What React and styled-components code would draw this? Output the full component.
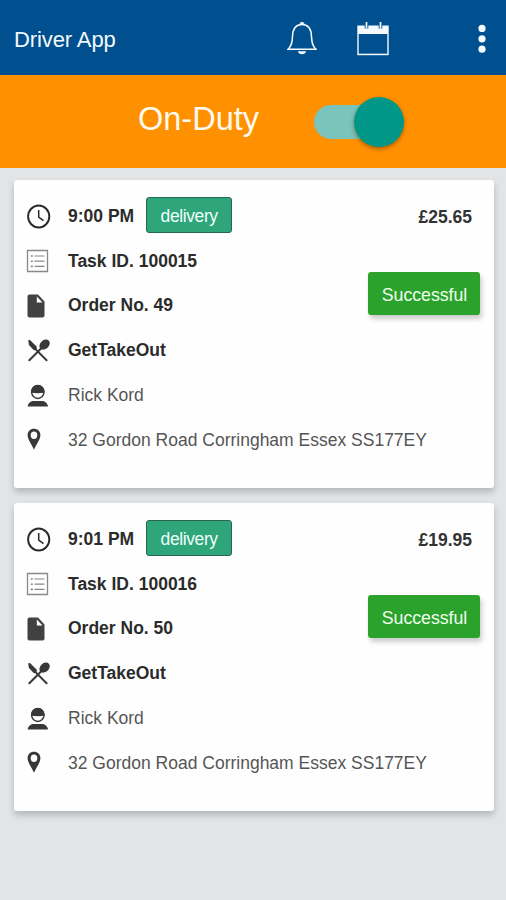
import React, { useState } from "react";
import styled, { createGlobalStyle } from "styled-components";

const GlobalStyle = createGlobalStyle`
  * {
    box-sizing: border-box;
  }
  body {
    margin: 0;
    background: #e2e4e6;
    font-family: "Liberation Sans", Arial, Helvetica, sans-serif;
  }
`;

const Page = styled.div`
  min-height: 900px;
  background: #e2e4e6;
`;

const Header = styled.header`
  display: flex;
  align-items: center;
  height: 75px;
  padding: 3px 20px 0 14px;
  background: #00508f;
  color: #f4faff;
`;

const Title = styled.h1`
  flex: 1;
  margin: 2px 0 0;
  font-size: 22px;
  font-weight: 400;
  letter-spacing: -0.1px;
`;

const IconButton = styled.button`
  display: flex;
  margin: 0 ${(props) => props.$gap || 0}px 0 0;
  padding: 0;
  border: 0;
  background: none;
  color: inherit;
  cursor: pointer;
`;

const DutyBar = styled.section`
  display: flex;
  align-items: center;
  height: 93px;
  padding-left: 138px;
  background: #ff9000;
`;

const DutyLabel = styled.span`
  width: 176px;
  margin-top: -4px;
  color: #fffaf0;
  font-size: 32.5px;
`;

const Track = styled.button`
  display: flex;
  align-items: center;
  justify-content: ${(props) => (props.$on ? "flex-end" : "flex-start")};
  width: 90px;
  height: 34px;
  margin-top: 1px;
  padding: 0;
  border: 0;
  border-radius: 17px;
  background: #7bc4bb;
  cursor: pointer;
`;

const Knob = styled.span`
  flex: none;
  width: 50px;
  height: 50px;
  border-radius: 50%;
  background: #009788;
  box-shadow: 0 2px 4px rgba(80, 50, 0, 0.5);
`;

const TaskList = styled.main`
  display: flex;
  flex-direction: column;
  gap: 15px;
  padding: 12px 12px 0 14px;
`;

const Card = styled.article`
  display: flex;
  height: 308px;
  padding: 14px 14px 0 12px;
  border-radius: 3px;
  background: #fefefe;
  box-shadow: 0 4px 6px rgba(60, 70, 80, 0.28);
`;

/* the address may run on below the status column */
const Details = styled.div`
  display: grid;
  flex: 1;
  grid-auto-rows: 44.8px;
  min-width: 0;
`;

const Row = styled.div`
  display: flex;
  align-items: center;
  min-width: 0;
  color: ${(props) => (props.$bold ? "#2b2b2b" : "#555")};
  font-size: 17.5px;
  font-weight: ${(props) => (props.$bold ? 700 : 400)};
  white-space: nowrap;
`;

const IconSlot = styled.span`
  display: flex;
  flex: none;
  width: 42px;
`;

const TypeTag = styled.span`
  display: flex;
  align-items: center;
  justify-content: center;
  width: 86px;
  height: 36px;
  margin: -2px 0 0 12px;
  padding-top: 2px;
  border: 1px solid #27664f;
  border-radius: 3px;
  background: #2fa57c;
  color: #eefff8;
  font-size: 17.5px;
  font-weight: 400;
  letter-spacing: -0.4px;
`;

const Side = styled.div`
  display: flex;
  flex: none;
  flex-direction: column;
  align-items: flex-end;
`;

const Price = styled.span`
  margin: 13px 8px 0 0;
  color: #333;
  font-size: 17.5px;
  font-weight: 700;
  line-height: 20px;
`;

const Status = styled.span`
  display: flex;
  align-items: center;
  justify-content: center;
  width: 112px;
  height: 43px;
  margin-top: 45px;
  padding: 3px 0 0 1px;
  border-radius: 3px;
  background: #2ba22c;
  box-shadow: 2px 4px 5px rgba(0, 0, 0, 0.2);
  color: #edffed;
  font-size: 17.8px;
  letter-spacing: -0.05px;
`;

const BellIcon = () => (
  <svg width="30" height="34" viewBox="0 0 30 34" fill="none" stroke="currentColor">
    <path
      d="M1 27.3C4.5 24 5.2 21 5.5 14.5C5.8 6 9.5 2.6 15 2.6S24.2 6 24.5 14.5C24.8 21 25.5 24 29 27.3Z"
      strokeWidth="1.5"
    />
    <path d="M13 2.2a2 1.9 0 0 1 4 0z" fill="currentColor" strokeWidth="0.8" />
    <path d="M10.8 29.3h8.4c-.8 4-7.6 4-8.4 0z" fill="currentColor" stroke="none" />
  </svg>
);

const CalendarIcon = () => (
  <svg width="32" height="34" viewBox="0 0 32 34" fill="none">
    <path d="M.3 3.5h31.4v29.7H.3z" fill="currentColor" />
    <path d="M1.7 12h28.6v19.7H1.7z" fill="#00508f" />
    <path d="M9.5 3v3.5M23.5 3v3.5" stroke="#00508f" strokeWidth="3.6" />
    <path d="M9.5 0v6.500M23.5 0v6.500" stroke="currentColor" strokeWidth="1.7" />
  </svg>
);

const DotsIcon = () => (
  <svg width="8" height="30" viewBox="0 0 8 30" fill="currentColor">
    <circle cx="4" cy="4.4" r="3.6" />
    <circle cx="4" cy="14.8" r="3.6" />
    <circle cx="4" cy="25.2" r="3.6" />
  </svg>
);

const ClockIcon = () => (
  <svg width="26" height="26" viewBox="0 0 26 26" fill="none" stroke="#292929">
    <ellipse cx="12.7" cy="13.5" rx="10.6" ry="11" strokeWidth="1.9" />
    <path d="M12.7 7v7.2l4.8 3.5" strokeWidth="1.5" />
  </svg>
);

const ListIcon = () => (
  <svg width="26" height="26" viewBox="0 0 26 26" fill="none" stroke="#888">
    <path d="M1.5 2.5h20v21h-20z" strokeWidth="1.3" />
    <path d="M8.5 8h10M8.5 13.2h10M8.5 18.4h10" strokeWidth="1.2" />
    <path d="M4.8 8h2M4.8 13.2h2M4.8 18.4h2" strokeWidth="1.6" />
  </svg>
);

const FileIcon = () => (
  <svg width="26" height="26" viewBox="0 0 26 26" fill="#414141">
    <path d="M3.5 1.500h8.500l6.500 7v14a2 2 0 0 1-2 2h-13a2 2 0 0 1-2-2v-19a2 2 0 0 1 2-2z" />
    <path d="M10.800 3.500v6h5.700z" fill="#fff" />
  </svg>
);

const CutleryIcon = () => (
  <svg width="26" height="26" viewBox="0 0 26 26" fill="#383838">
    <path d="M2.200 2.300l1.800-.2 6.800 6.700-.3 3-2.600.4-5-5.200z" />
    <ellipse cx="18.600" cy="6.600" rx="5.800" ry="4.300" transform="rotate(-43 18.600 6.600)" />
    <path d="M15.800 9.700L3.300 22.200M9 10.600L20.600 22.200" stroke="#383838" strokeWidth="2" strokeLinecap="round" />
  </svg>
);

const PersonIcon = () => (
  <svg width="26" height="26" viewBox="0 0 26 26" fill="#383838">
    <ellipse cx="11.800" cy="9" rx="6.200" ry="6.500" fill="#fff" stroke="#383838" strokeWidth="1.400" />
    <path d="M4.900 9.800C4.900 4.600 8 2 11.800 2s6.900 2.600 6.900 7.800c-4 .6-9.800.6-13.800 0z" />
    <path d="M1.500 23.400c.6-2.600 2.300-4.500 5-5.400h10.600c2.700.9 4.400 2.800 5 5.400z" />
  </svg>
);

const PinIcon = () => (
  <svg width="26" height="26" viewBox="0 0 26 26" fill="#383838">
    <path
      fillRule="evenodd"
      d="M8 1.800c-3.700 0-6.400 2.700-6.400 6.300 0 4.500 3.800 8.500 6.400 14.600 2.600-6.100 6.400-10.100 6.400-14.600 0-3.600-2.700-6.300-6.400-6.300zM8 4.500a3.300 3.700 0 1 1 0 7.400A3.300 3.700 0 0 1 8 4.500z"
    />
  </svg>
);

const tasks = [
  {
    id: "100015",
    time: "9:00 PM",
    type: "delivery",
    order: "49",
    shop: "GetTakeOut",
    customer: "Rick Kord",
    address: "32 Gordon Road Corringham Essex SS177EY",
    price: "£25.65",
    status: "Successful",
  },
  {
    id: "100016",
    time: "9:01 PM",
    type: "delivery",
    order: "50",
    shop: "GetTakeOut",
    customer: "Rick Kord",
    address: "32 Gordon Road Corringham Essex SS177EY",
    price: "£19.95",
    status: "Successful",
  },
];

const DetailRow = ({ icon, bold, children }) => (
  <Row $bold={bold}>
    <IconSlot>{icon}</IconSlot>
    {children}
  </Row>
);

const TaskCard = ({ task }) => {
  return (
    <Card>
      <Details>
        <DetailRow icon={<ClockIcon />} bold>
          {task.time}
          <TypeTag>{task.type}</TypeTag>
        </DetailRow>
        <DetailRow icon={<ListIcon />} bold>
          Task ID. {task.id}
        </DetailRow>
        <DetailRow icon={<FileIcon />} bold>
          Order No. {task.order}
        </DetailRow>
        <DetailRow icon={<CutleryIcon />} bold>
          {task.shop}
        </DetailRow>
        <DetailRow icon={<PersonIcon />}>{task.customer}</DetailRow>
        <DetailRow icon={<PinIcon />}>{task.address}</DetailRow>
      </Details>
      <Side>
        <Price>{task.price}</Price>
        <Status>{task.status}</Status>
      </Side>
    </Card>
  );
};

const App = () => {
  const [onDuty, setOnDuty] = useState(true);
  return (
    <Page>
      <GlobalStyle />
      <Header>
        <Title>Driver App</Title>
        <IconButton $gap={40} aria-label="Notifications">
          <BellIcon />
        </IconButton>
        <IconButton $gap={89} aria-label="Calendar">
          <CalendarIcon />
        </IconButton>
        <IconButton aria-label="Menu">
          <DotsIcon />
        </IconButton>
      </Header>
      <DutyBar>
        <DutyLabel>{onDuty ? "On-Duty" : "Off-Duty"}</DutyLabel>
        <Track $on={onDuty} onClick={() => setOnDuty(!onDuty)} aria-label="Toggle duty">
          <Knob />
        </Track>
      </DutyBar>
      <TaskList>
        {tasks.map((task) => (
          <TaskCard key={task.id} task={task} />
        ))}
      </TaskList>
    </Page>
  );
};

export default App;
